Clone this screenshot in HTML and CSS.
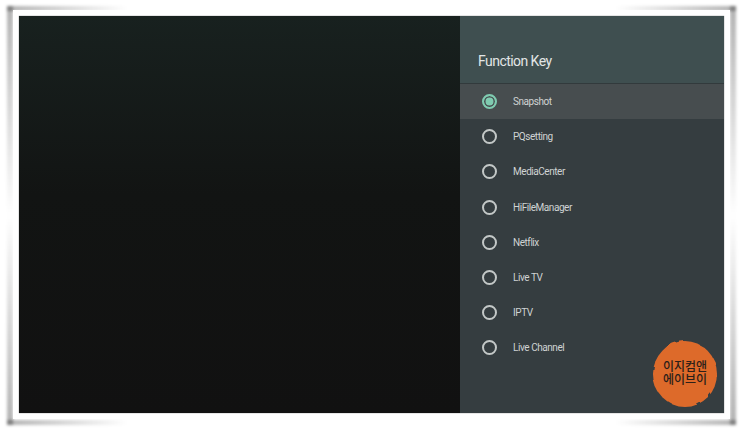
FILE: index.html
```html
<!DOCTYPE html>
<html lang="ko">
<head>
    <meta charset="UTF-8">
    <title>Function Key</title>
    <link rel="stylesheet" href="styles.css">
</head>
<body>
    <div class="frame">
        <div class="screen">
            <div class="video"></div>
            <div class="panel">
                <div class="panel-head">Function Key</div>
                <div class="option selected"><span class="radio"></span>Snapshot</div>
                <div class="option"><span class="radio"></span>PQsetting</div>
                <div class="option"><span class="radio"></span>MediaCenter</div>
                <div class="option"><span class="radio"></span>HiFileManager</div>
                <div class="option"><span class="radio"></span>Netflix</div>
                <div class="option"><span class="radio"></span>Live TV</div>
                <div class="option"><span class="radio"></span>IPTV</div>
                <div class="option"><span class="radio"></span>Live Channel</div>
            </div>
        </div>
        <!-- Tampon orange par-dessus le panneau -->
        <div class="badge">
            <svg class="badge-blob" width="70" height="72" viewBox="0 0 70 72">
                <filter id="rough">
                    <feTurbulence type="fractalNoise" baseFrequency="0.08" numOctaves="2" seed="4"/>
                    <feDisplacementMap in="SourceGraphic" scale="4"/>
                </filter>
                <ellipse cx="35" cy="36" rx="32" ry="33" fill="#dd6a2c" filter="url(#rough)"/>
            </svg>
            <span class="badge-text">이지컴앤<br>에이브이</span>
        </div>
    </div>
</body>
</html>
```
FILE: styles.css
```css
html {
    background: #fff;
}
html, body {
    margin: 0;
    height: 430px;
    overflow: hidden;
}
body {
    padding: 10px 13px 11px;
    box-sizing: border-box;
    font-family: Roboto, "Noto Sans", sans-serif;
}
.frame {
    position: relative;
    height: 409px;
    padding: 6px;
    box-sizing: border-box;
    background: #fff;
}
/* Ombre visible seulement vers les coins */
.frame::before {
    content: "";
    position: absolute;
    top: -4px;
    right: -6px;
    bottom: -6px;
    left: -6px;
    z-index: -1;
    filter: blur(1.8px);
    background-image:
        linear-gradient(to right, rgba(0, 0, 0, 0.3), transparent),
        linear-gradient(to left, rgba(0, 0, 0, 0.3), transparent),
        linear-gradient(to right, rgba(0, 0, 0, 0.3), transparent),
        linear-gradient(to left, rgba(0, 0, 0, 0.3), transparent),
        linear-gradient(to bottom, rgba(0, 0, 0, 0.3), transparent),
        linear-gradient(to bottom, rgba(0, 0, 0, 0.3), transparent),
        linear-gradient(to top, rgba(0, 0, 0, 0.3), transparent),
        linear-gradient(to top, rgba(0, 0, 0, 0.3), transparent);
    background-size:
        120px 5px, 120px 5px, 120px 5px, 120px 5px,
        6px 210px, 6px 210px, 6px 210px, 6px 210px;
    background-position:
        0 0, 100% 0, 0 100%, 100% 100%,
        0 0, 100% 0, 0 100%, 100% 100%;
    background-repeat: no-repeat;
}
.screen {
    display: flex;
    height: 100%;
    box-shadow: 0 0 1px rgba(0, 0, 0, 0.6);
}
.video {
    flex: 1;
    background: linear-gradient(#18211f, #121413 45%, #111 100%);
}
.panel {
    width: 264px;
    background: #353d40;
    color: #cfd3d3;
    font-size: 10px;
    letter-spacing: -0.45px;
}
.panel-head {
    height: 68px;
    box-sizing: border-box;
    padding: 36px 0 0 18px;
    font-size: 14px;
    letter-spacing: -0.55px;
    line-height: 18px;
    color: #e2e6e6;
    background: #3f4f50;
    border-bottom: 1px solid #323a3c;
}
.option {
    display: flex;
    align-items: center;
    gap: 16px;
    height: 35.2px;
    padding-left: 22px;
}
.selected {
    background: #474d4f;
}
.radio {
    width: 15px;
    height: 15px;
    box-sizing: border-box;
    border: 2px solid #c3c8c7;
    border-radius: 50%;
}
.selected .radio {
    border-color: #7fcbb0;
    background: #7fcbb0;
    box-shadow: inset 0 0 0 1.5px #474d4f;
}
.badge {
    position: absolute;
    right: 10px;
    bottom: 9px;
    width: 70px;
    height: 72px;
    display: flex;
    align-items: center;
    justify-content: center;
}
.badge-blob {
    position: absolute;
    top: 0;
    left: 0;
}
.badge-text {
    position: relative;
    top: -2px;
    text-align: center;
    font-family: "Noto Sans CJK KR", sans-serif;
    font-size: 12px;
    font-weight: 500;
    line-height: 13px;
    color: #2b2019;
}
```
